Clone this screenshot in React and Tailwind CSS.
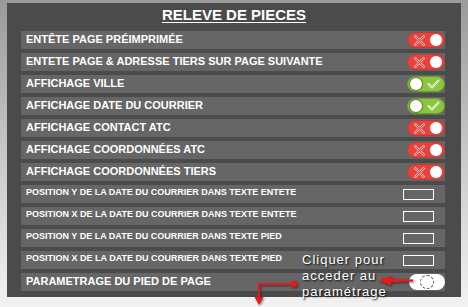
import React from "react";

const font = { fontFamily: '"Liberation Sans", Arial, sans-serif' };

// Big rows with on/off switch
const switchRows = [
  { label: "ENTÊTE PAGE PRÉIMPRIMÉE", on: false },
  { label: "ENTETE PAGE & ADRESSE TIERS SUR PAGE SUIVANTE", on: false },
  { label: "AFFICHAGE VILLE", on: true },
  { label: "AFFICHAGE DATE DU COURRIER", on: true },
  { label: "AFFICHAGE CONTACT ATC", on: false },
  { label: "AFFICHAGE COORDONNÉES ATC", on: false },
  { label: "AFFICHAGE COORDONNÉES TIERS", on: false },
];

const positionRows = [
  "POSITION Y DE LA DATE DU COURRIER DANS TEXTE ENTETE",
  "POSITION X DE LA DATE DU COURRIER DANS TEXTE ENTETE",
  "POSITION Y DE LA DATE DU COURRIER DANS TEXTE PIED",
  "POSITION X DE LA DATE DU COURRIER DANS TEXTE PIED",
];

const Toggle = ({ on }) =>
  on ? (
    <div className="relative flex items-center h-[16px] w-[38px] rounded-full bg-[#8cc63e] border border-[#6f9a33]">
      <div className="ml-[2px] w-[12px] h-[12px] rounded-full bg-white shadow-[0_0_1px_1px_rgba(0,0,0,0.35)]"></div>
      <svg className="ml-[5px]" width="13" height="10" viewBox="0 0 13 10">
        <path d="M1.5 5 L5 8.5 L11.5 1.5" fill="none" stroke="#fff" strokeWidth="2" strokeLinecap="round" strokeLinejoin="round" />
        <path d="M1.5 5 L5 8.5 L11.5 1.5" fill="none" stroke="#8cc63e" strokeWidth="0.7" strokeLinecap="round" strokeLinejoin="round" />
      </svg>
    </div>
  ) : (
    <div className="relative flex items-center justify-between h-[16px] w-[38px] rounded-full bg-[#e8423c] border border-[#b3403c] pl-[6px] pr-[2px]">
      <svg width="11" height="11" viewBox="0 0 11 11">
        <path d="M1.5 1.5 L9.5 9.5 M9.5 1.5 L1.5 9.5" fill="none" stroke="#fff" strokeWidth="2.4" strokeLinecap="round" />
        <path d="M1.5 1.5 L9.5 9.5 M9.5 1.5 L1.5 9.5" fill="none" stroke="#e8423c" strokeWidth="1.1" strokeLinecap="round" />
      </svg>
      <div className="w-[12px] h-[12px] rounded-full bg-white"></div>
    </div>
  );

export default function App() {
  return (
    <div
      className="relative w-[468px] h-[307px] overflow-hidden pt-[3px] px-[7px] bg-gradient-to-b from-[#9a9a9a] via-[#c8c8c8] to-[#f2f2f2]"
      style={font}
    >
      <div className="w-[454px] h-[294px] bg-[#4b4b4b] flex flex-col">
        {/* Title */}
        <div className="h-[28px] flex justify-center pt-[3px]">
          <span className="text-white font-bold text-[15px] leading-[18px] underline underline-offset-[2px]">
            RELEVE DE PIECES
          </span>
        </div>

        {/* Rows */}
        <div className="flex flex-col gap-[4px] pl-[14px] pr-[16px]">
          {switchRows.map((row) => (
            <div key={row.label} className="h-[18px] bg-[#666666] flex items-center justify-between pl-[5px]">
              <span className="text-white font-bold text-[11px] leading-none mb-[2px]">{row.label}</span>
              <Toggle on={row.on} />
            </div>
          ))}
          {positionRows.map((label, i) => (
            <div key={i} className="h-[18px] bg-[#666666] flex items-center justify-between pl-[5px]">
              <span className="text-white font-bold text-[9px] leading-none mb-[4px]">{label}</span>
              <div className="w-[31px] h-[11px] border-[1.5px] border-white mr-[11px]"></div>
            </div>
          ))}
          <div className="h-[18px] bg-[#666666] flex items-center justify-between pl-[5px]">
            <span className="text-white font-bold text-[11px] leading-none mb-[2px]">PARAMETRAGE DU PIED DE PAGE</span>
            <div className="flex items-center justify-center h-[16px] w-[36px] rounded-full bg-white">
              <div className="w-[14px] h-[14px] rounded-full border border-dashed border-[#555]"></div>
            </div>
          </div>
        </div>
      </div>

      {/* Annotation */}
      <div className="absolute left-[302px] top-[252px] text-white text-[13px] leading-[16px] tracking-[1px] [text-shadow:1px_1px_2px_#000]">
        <div>Cliquer pour</div>
        <div>acceder au</div>
        <div>paramétrage</div>
      </div>
      <svg className="absolute left-0 top-0 pointer-events-none" width="468" height="307" viewBox="0 0 468 307">
        <g style={{ filter: "drop-shadow(1px 1px 1px rgba(0,0,0,0.5))" }}>
          <path d="M413 279.5 L389 278.5 L389 282.5 L413 281.5 Z" fill="#e41b1b" />
          <path d="M378 280.5 L391 275.5 L391 285.5 Z" fill="#e41b1b" />
          <circle cx="294" cy="284" r="3.2" fill="#e41b1b" />
          <path d="M294 284 L259 284 L259 298" fill="none" stroke="#e41b1b" strokeWidth="2" />
          <path d="M259 305 L254.5 297 L263.5 297 Z" fill="#e41b1b" />
        </g>
      </svg>
    </div>
  );
}
